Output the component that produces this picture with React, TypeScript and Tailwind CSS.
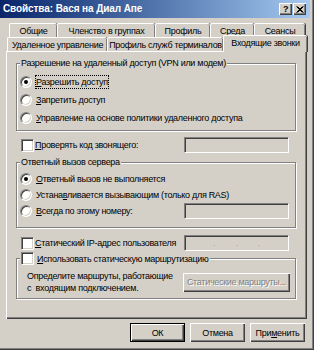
import type { ReactNode } from 'react'

const FONT = { fontFamily: '"Liberation Sans", Arial, sans-serif' }

function U({ children }: { children: ReactNode }) {
  return <span className="underline underline-offset-[1px]">{children}</span>
}

function Radio({ checked = false }: { checked?: boolean }) {
  return (
    <span className="relative flex h-[12px] w-[12px] shrink-0 items-center justify-center rounded-full border border-t-[#808080] border-l-[#808080] border-r-white border-b-white bg-white shadow-[inset_1px_1px_0_#404040,inset_-1px_-1px_0_#d4d0c8]">
      {checked && <span className="h-[4px] w-[4px] rounded-full bg-black" />}
    </span>
  )
}

function Check() {
  return (
    <span className="h-[13px] w-[13px] shrink-0 border border-t-[#808080] border-l-[#808080] border-r-white border-b-white bg-white shadow-[inset_1px_1px_0_#404040,inset_-1px_-1px_0_#d4d0c8]" />
  )
}

function Field({ className = '', children }: { className?: string; children?: ReactNode }) {
  return (
    <div
      className={`h-[16px] w-[105px] shrink-0 border border-t-[#808080] border-l-[#808080] border-r-white border-b-white bg-[#d4d0c8] shadow-[inset_1px_1px_0_#404040,inset_-1px_-1px_0_#d4d0c8] ${className}`}
    >
      {children}
    </div>
  )
}

function Group({ className = '', legend, children }: { className?: string; legend: ReactNode; children: ReactNode }) {
  return (
    <div
      className={`relative ml-[10px] w-[280px] border border-[#808080] shadow-[1px_1px_0_#fff,inset_1px_1px_0_#fff] ${className}`}
    >
      <div className="absolute -top-[7px] left-[3px] flex items-center gap-[3px] bg-[#d4d0c8] px-[1px] leading-[12px]">
        {legend}
      </div>
      {children}
    </div>
  )
}

function Tab({ w, label, selected = false }: { w: number; label: string; selected?: boolean }) {
  return (
    <div
      style={{ width: w }}
      className={`flex shrink-0 items-center justify-center rounded-t-[2px] border-l border-t border-white bg-[#d4d0c8] shadow-[inset_-1px_0_0_#808080,1px_0_0_#404040] ${
        selected ? 'relative z-10 -mb-[1px] h-[17px] pb-[2px]' : 'h-[14px]'
      }`}
    >
      {label}
    </div>
  )
}

function Button({ w, children, def = false, disabled = false }: { w: number; children: ReactNode; def?: boolean; disabled?: boolean }) {
  return (
    <div
      style={{ width: w }}
      className={`flex h-[19px] shrink-0 items-center justify-center bg-[#d4d0c8] ${
        def
          ? 'border border-black shadow-[inset_1px_1px_0_#fff,inset_-1px_-1px_0_#404040,inset_-2px_-2px_0_#808080]'
          : 'shadow-[inset_1px_1px_0_#fff,inset_-1px_-1px_0_#404040,inset_-2px_-2px_0_#808080]'
      } ${disabled ? 'text-[#808080] [text-shadow:1px_1px_0_#fff]' : ''}`}
    >
      {children}
    </div>
  )
}

export default function App() {
  return (
    <div
      style={FONT}
      className="flex h-[350px] w-[314px] flex-col whitespace-nowrap bg-[#d4d0c8] text-[9px] leading-[12px] tracking-[-0.3px] text-black shadow-[inset_-1px_-1px_0_#404040,inset_-2px_-2px_0_#808080,inset_-3px_-3px_0_#d4d0c8]"
    >
      {/* title bar */}
      <div className="mr-[4px] flex h-[18px] shrink-0 items-center bg-gradient-to-r from-[#0a246a] to-[#a6caf0] pl-[3px] pr-[4px]">
        <span className="text-[10px] font-bold tracking-[-0.1px] text-white">Свойства: Вася на Диал Апе</span>
        <div className="ml-auto flex gap-[1px]">
          <div className="flex h-[12px] w-[13px] items-center justify-center bg-[#d4d0c8] text-[9px] font-bold leading-none shadow-[inset_1px_1px_0_#fff,inset_-1px_-1px_0_#404040,inset_-2px_-2px_0_#808080]">
            ?
          </div>
          <div className="flex h-[12px] w-[13px] items-center justify-center bg-[#d4d0c8] shadow-[inset_1px_1px_0_#fff,inset_-1px_-1px_0_#404040,inset_-2px_-2px_0_#808080]">
            <svg width="8" height="7" viewBox="0 0 8 7">
              <path d="M0.5 0.5 L6.5 6.5 M1.5 0.5 L7.5 6.5 M6.5 0.5 L0.5 6.5 M7.5 0.5 L1.5 6.5" stroke="#000" strokeWidth="1" />
            </svg>
          </div>
        </div>
      </div>

      {/* tabs */}
      <div className="ml-[9px] mt-[5px] flex">
        <Tab w={48} label="Общие" />
        <Tab w={98} label="Членство в группах" />
        <Tab w={55} label="Профиль" />
        <Tab w={44} label="Среда" />
        <Tab w={51} label="Сеансы" />
      </div>
      <div className="relative ml-[7px] -mt-[3px] flex h-[17px] items-end">
        <Tab w={100} label="Удаленное управление" />
        <Tab w={116} label="Профиль служб терминалов" />
        <Tab w={84} label="Входящие звонки" selected />
      </div>

      {/* panel */}
      <div className="ml-[6px] flex h-[268px] w-[301px] shrink-0 flex-col shadow-[inset_1px_1px_0_#fff,inset_-1px_-1px_0_#404040,inset_-2px_-2px_0_#808080]">
        <Group className="mt-[12px] h-[68px] pt-[9px]" legend={<span>Разрешение на удаленный доступ (VPN или модем)</span>}>
          <div className="flex h-[18px] items-center gap-[4px] pl-[3px]">
            <Radio checked />
            <span className="outline outline-1 outline-dotted outline-black">
              <U>Р</U>азрешить доступ
            </span>
          </div>
          <div className="flex h-[18px] items-center gap-[4px] pl-[3px]">
            <Radio />
            <span>
              <U>З</U>апретить доступ
            </span>
          </div>
          <div className="flex h-[18px] items-center gap-[4px] pl-[3px]">
            <Radio />
            <span>
              <U>У</U>правление на основе политики удаленного доступа
            </span>
          </div>
        </Group>

        <div className="mt-[6px] flex h-[16px] items-center pl-[15px] pr-[18px]">
          <Check />
          <span className="ml-[1px]">
            <U>П</U>роверять код звонящего:
          </span>
          <Field className="ml-auto" />
        </div>

        <Group className="mt-[9px] h-[66px] pt-[8px]" legend={<span>Ответный вызов сервера</span>}>
          <div className="flex h-[16px] items-center gap-[4px] pl-[3px]">
            <Radio checked />
            <span>
              <U>О</U>тветный вызов не выполняется
            </span>
          </div>
          <div className="flex h-[16px] items-center gap-[4px] pl-[3px]">
            <Radio />
            <span>
              Устана<U>в</U>ливается вызывающим (только для RAS)
            </span>
          </div>
          <div className="flex h-[16px] items-center gap-[4px] pl-[3px] pr-[6px]">
            <Radio />
            <span>
              <U>В</U>сегда по этому номеру:
            </span>
            <Field className="ml-auto" />
          </div>
        </Group>

        <div className="mt-[7px] flex h-[16px] items-center pl-[15px] pr-[18px]">
          <Check />
          <span className="ml-[1px]">
            <U>С</U>татический IP-адрес пользователя
          </span>
          <Field className="ml-auto flex items-center justify-around px-[18px] text-[#a0a0a0]">
            <span>.</span>
            <span>.</span>
            <span>.</span>
          </Field>
        </div>

        <Group
          className="mt-[7px] h-[41px] pt-[11px]"
          legend={
            <>
              <Check />
              <span>
                <U>И</U>спользовать статическую маршрутизацию
              </span>
            </>
          }
        >
          <div className="flex items-center pl-[10px] pr-[5px]">
            <div>
              <div>Определите маршруты, работающие</div>
              <div>с&nbsp; входящим подключением.</div>
            </div>
            <div className="ml-auto">
              <Button w={107} disabled>
                Статические маршруты...
              </Button>
            </div>
          </div>
        </Group>
      </div>

      {/* dialog buttons */}
      <div className="mt-[4px] flex gap-[5px] pl-[130px]">
        <Button w={55} def>
          ОК
        </Button>
        <Button w={55}>Отмена</Button>
        <Button w={55}>
          При<U>м</U>енить
        </Button>
      </div>
    </div>
  )
}
